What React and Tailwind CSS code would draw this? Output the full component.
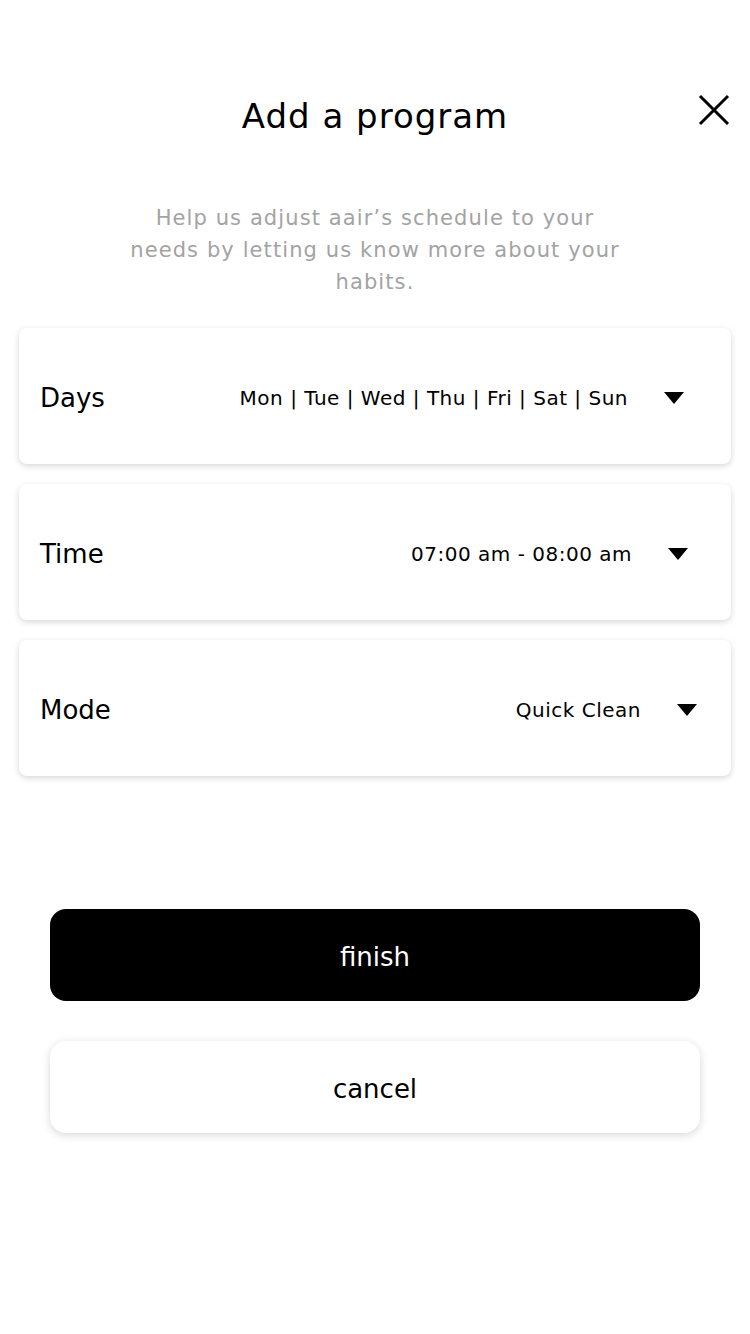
import React from "react";

const Caret = () => (
  <svg width="20" height="12" viewBox="0 0 20 12" className="shrink-0">
    <path d="M0 0 L20 0 L10 12 Z" fill="#000" />
  </svg>
);

const rows = [
  { label: "Days", value: "Mon | Tue | Wed | Thu | Fri | Sat | Sun", pad: "pr-[47px]" },
  { label: "Time", value: "07:00 am - 08:00 am", pad: "pr-[43px]" },
  { label: "Mode", value: "Quick Clean", pad: "pr-[34px]" },
];

const App = () => {
  return (
    <div className="w-[750px] min-h-[1334px] bg-white text-black font-['DejaVu_Sans',sans-serif]">
      <div className="relative pt-[92px] flex justify-center">
        <h1 className="text-[34px] leading-[48px] tracking-[1px] text-black">Add a program</h1>
        <button className="absolute right-[20px] top-[94px] w-[32px] h-[32px]">
          <svg width="32" height="32" viewBox="0 0 32 32">
            <path d="M2 2 L30 30 M30 2 L2 30" stroke="#000" strokeWidth="3" />
          </svg>
        </button>
      </div>

      <p className="mx-auto mt-[62px] w-[580px] text-center text-[21px] leading-[32px] tracking-[1.1px] text-[#a3a3a3]">
        Help us adjust aair’s schedule to your
        <br />
        needs by letting us know more about your
        <br />
        habits.
      </p>

      <div className="mt-[30px] px-[19px] flex flex-col gap-[20px]">
        {rows.map((r) => (
          <div
            key={r.label}
            className={`h-[136px] rounded-[8px] bg-white shadow-[0_2px_6px_rgba(0,0,0,0.16)] flex items-center pl-[21px] pt-[4px] ${r.pad}`}
          >
            <span className="text-[26px] flex-1">{r.label}</span>
            <span className="text-[20px] tracking-[0.5px] mr-[36px]">{r.value}</span>
            <Caret />
          </div>
        ))}
      </div>

      <div className="mt-[133px] px-[50px] flex flex-col gap-[40px]">
        <button className="h-[92px] pt-[5px] rounded-[16px] bg-black text-white text-[26px]">
          finish
        </button>
        <button className="h-[92px] pt-[5px] rounded-[16px] bg-white text-black text-[26px] shadow-[0_2px_8px_rgba(0,0,0,0.16)]">
          cancel
        </button>
      </div>
    </div>
  );
};

export default App;
